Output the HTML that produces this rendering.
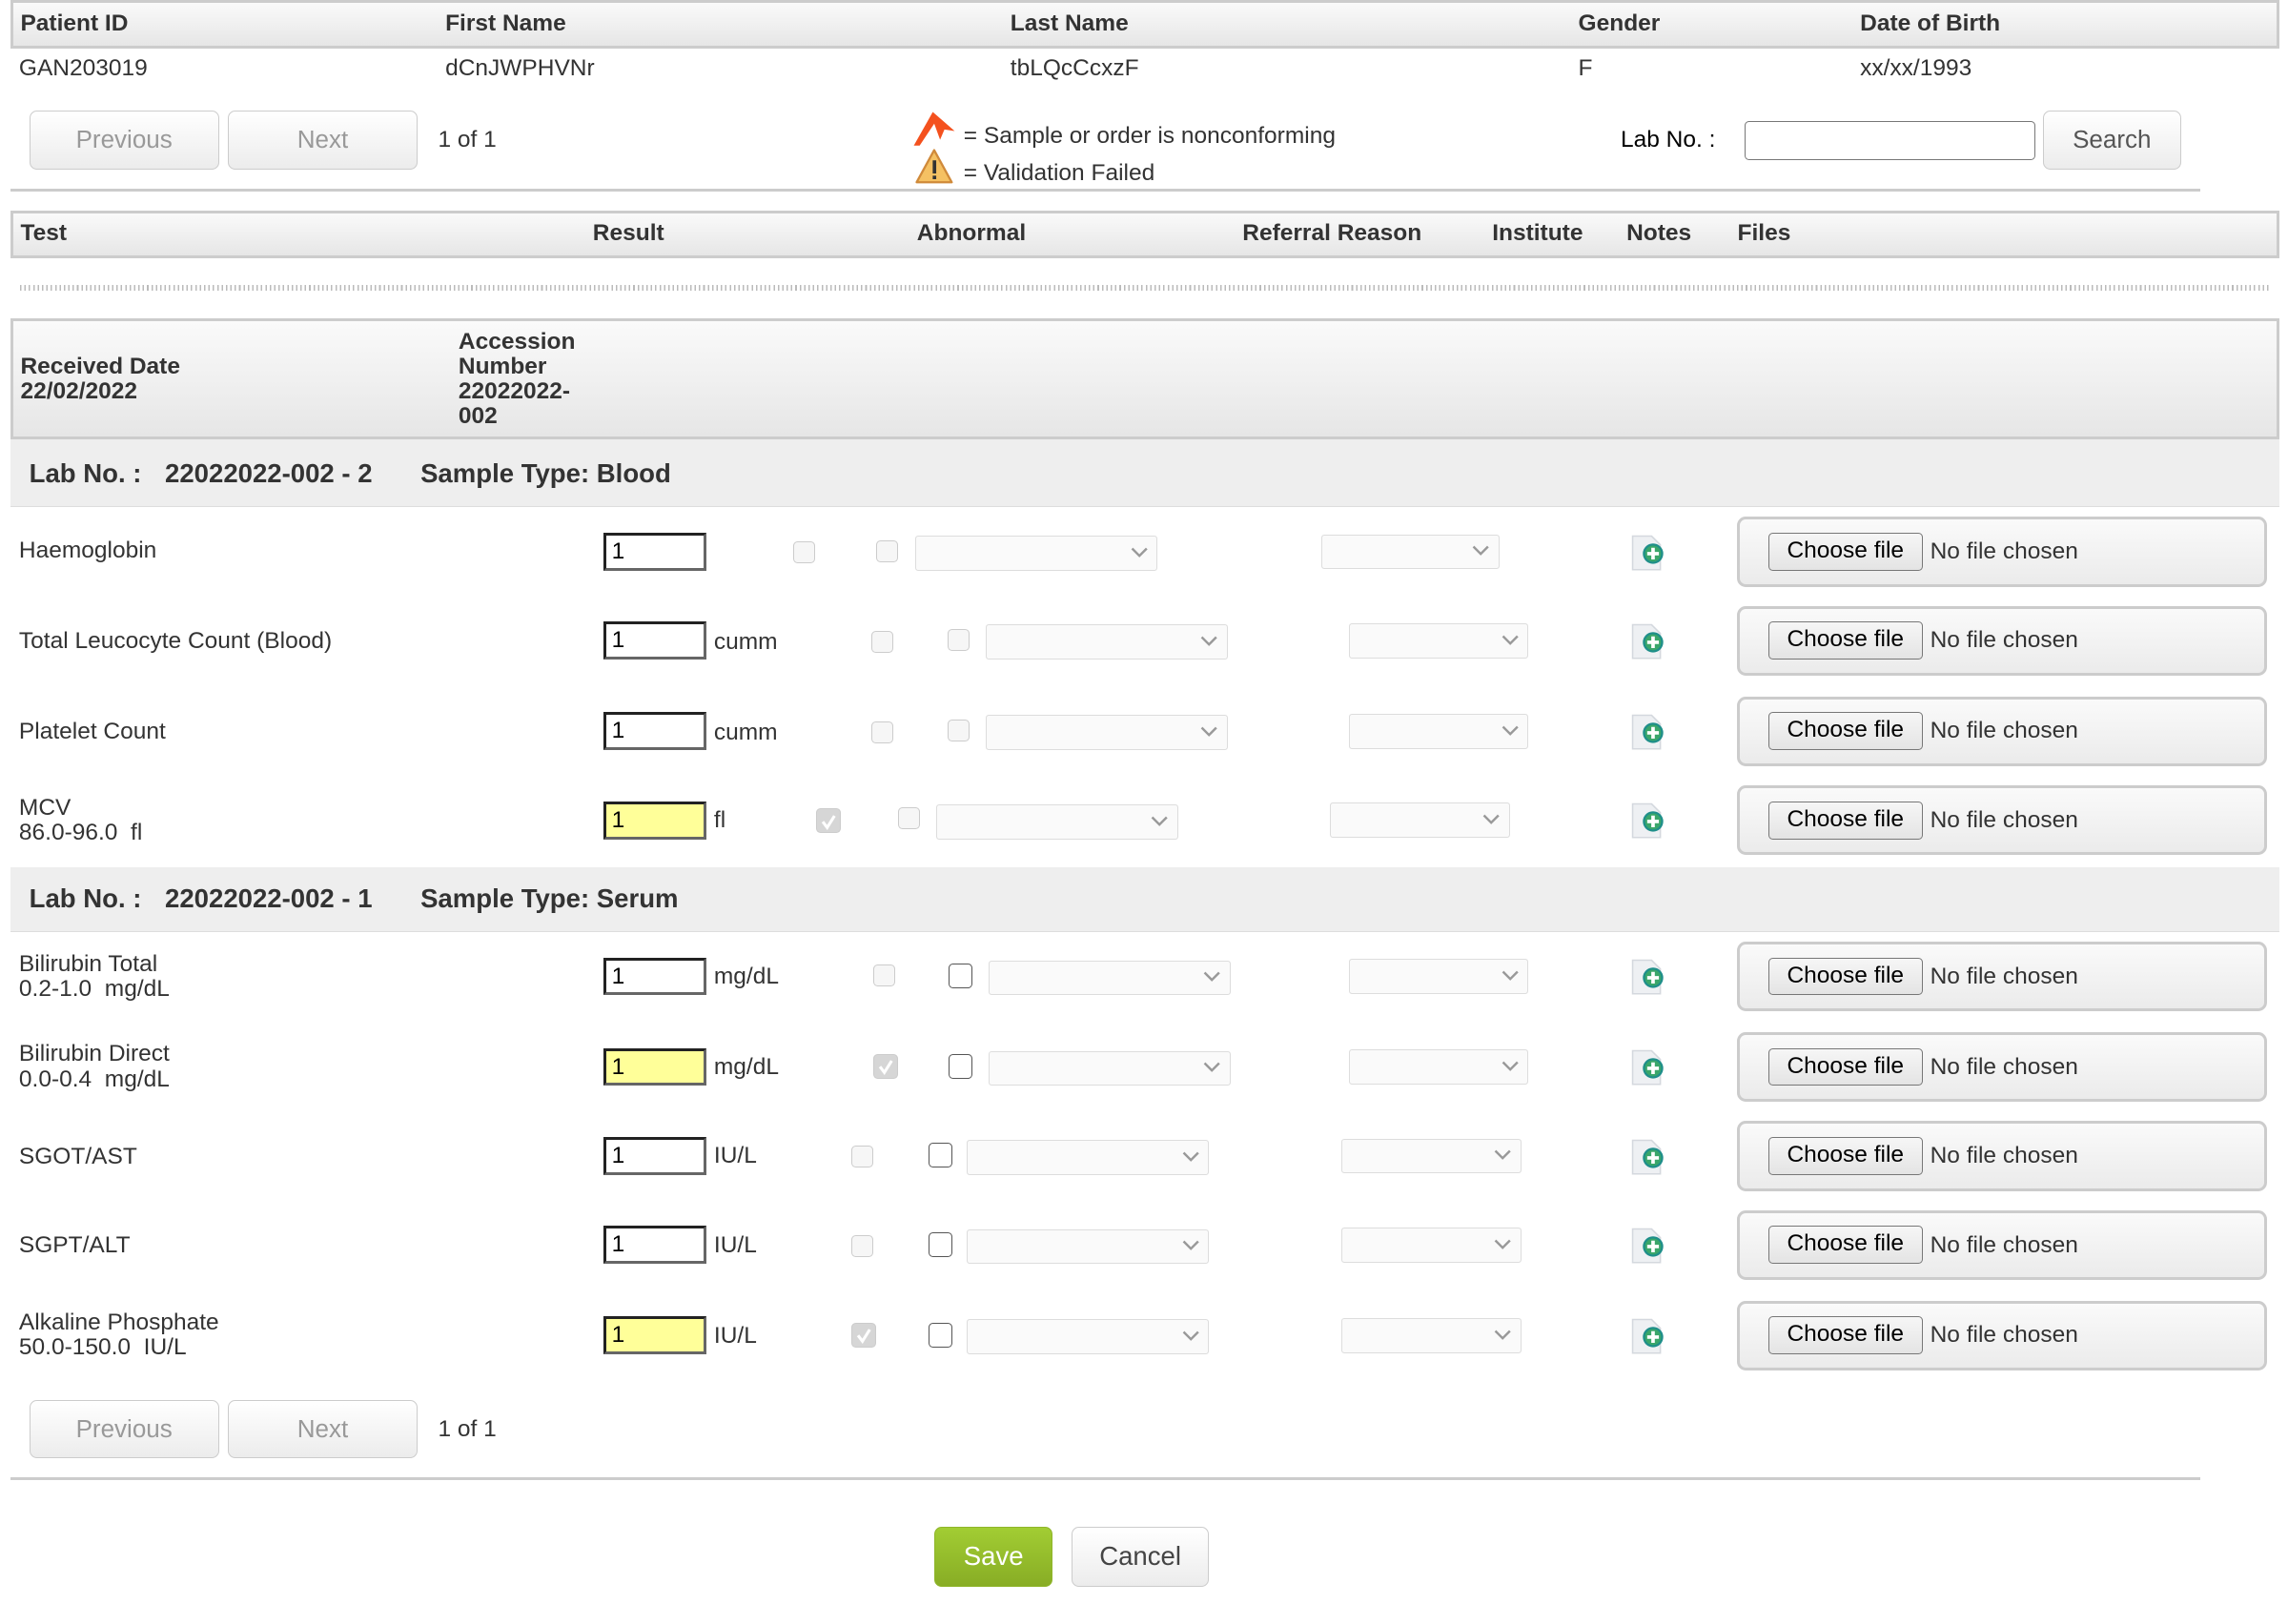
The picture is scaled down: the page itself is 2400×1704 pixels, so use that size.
<!DOCTYPE html>
<html><head><meta charset="utf-8">
<style>
html,body{margin:0;padding:0;background:#fff;}
body{width:2400px;height:1704px;overflow:hidden;}
#w{zoom:1.5315;position:relative;width:1567px;height:1112px;font-family:"Liberation Sans",Arial,sans-serif;font-size:16px;color:#333;}
#w div,#w span{position:absolute;white-space:nowrap;}
.bar{background:linear-gradient(#fafafa,#e6e6e6);border:2px solid #ccc;box-sizing:border-box;}
.b{font-weight:bold;}
.btn{border:1px solid #ccc;border-radius:5px;background:linear-gradient(#fff,#ececec);box-sizing:border-box;text-align:center;color:#999;font-size:17px;}
.inp{width:71px;height:26px;box-sizing:border-box;border:2px solid #666;border-top-color:#222;border-left-color:#222;background:#fff;font-size:16px;color:#000;padding-left:4px;line-height:22px;}
.y{background:#ffff99;}
.cb{width:15px;height:15px;box-sizing:border-box;border:1px solid #ccc;border-radius:3px;background:#f6f6f6;}
.cb.en{border:1px solid #555;background:#fff;}
.cb.ck{background:#d6d6d6;border-color:#ccc;}
.sel{height:24px;box-sizing:border-box;border:1px solid #ddd;border-radius:2px;background:#fafafa;}
.sel svg{position:absolute;right:6px;top:7px;}
.fb{width:363px;height:48px;box-sizing:border-box;border:2px solid #ccc;border-radius:6px;background:linear-gradient(#fafafa,#ebebeb);}
.cf{left:19px;top:9px;width:106px;height:26px;box-sizing:border-box;border:1px solid #777;border-radius:3px;background:linear-gradient(#f6f6f6,#e4e4e4);color:#000;font-size:16px;text-align:center;line-height:24px;}
.nf{left:130px;top:13px;color:#333;font-size:16px;}
.nm{left:13px;font-size:16px;color:#333;line-height:17px;}
</style></head><body><div id="w">

<div class="bar" style="left:7px;top:0;width:1554px;height:33px;"></div>
<div class="b" style="left:14px;top:7px;">Patient ID</div>
<div class="b" style="left:305px;top:7px;">First Name</div>
<div class="b" style="left:692px;top:7px;">Last Name</div>
<div class="b" style="left:1081px;top:7px;">Gender</div>
<div class="b" style="left:1274px;top:7px;">Date of Birth</div>
<div style="left:13px;top:38px;">GAN203019</div>
<div style="left:305px;top:38px;">dCnJWPHVNr</div>
<div style="left:692px;top:38px;">tbLQcCcxzF</div>
<div style="left:1081px;top:38px;">F</div>
<div style="left:1274px;top:38px;">xx/xx/1993</div>

<div class="btn" style="left:20px;top:76px;width:130px;height:40px;line-height:38px;">Previous</div>
<div class="btn" style="left:156px;top:76px;width:130px;height:40px;line-height:38px;">Next</div>
<div style="left:300px;top:87px;">1 of 1</div>

<svg style="position:absolute;left:625px;top:76px" width="30" height="25" viewBox="0 0 30 25"><path d="M1 24 L14 1 L29 14 L22 13 L19 20 L15 9 L5 24 Z" fill="#f4511e"/></svg>
<div style="left:660px;top:84px;">= Sample or order is nonconforming</div>
<svg style="position:absolute;left:627px;top:102px" width="26" height="24" viewBox="0 0 26 24"><path d="M13 1 L25 23 L1 23 Z" fill="#f5c163" stroke="#d08a3a" stroke-width="1.5" stroke-linejoin="round"/><rect x="12" y="8" width="2.4" height="9" fill="#333"/><rect x="12" y="18.5" width="2.4" height="2.4" fill="#333"/></svg>
<div style="left:660px;top:110px;">= Validation Failed</div>

<div style="left:1110px;top:87px;color:#000;">Lab No. :</div>
<div style="left:1195px;top:83px;width:199px;height:27px;box-sizing:border-box;border:1px solid #777;border-radius:3px;background:#fff;"></div>
<div class="btn" style="left:1399px;top:76px;width:95px;height:40px;line-height:38px;color:#555;">Search</div>
<div style="left:7px;top:129px;width:1500px;height:2px;background:#ccc;"></div>

<div class="bar" style="left:7px;top:144px;width:1554px;height:33px;"></div>
<div class="b" style="left:14px;top:151px;">Test</div>
<div class="b" style="left:406px;top:151px;">Result</div>
<div class="b" style="left:628px;top:151px;">Abnormal</div>
<div class="b" style="left:851px;top:151px;">Referral Reason</div>
<div class="b" style="left:1022px;top:151px;">Institute</div>
<div class="b" style="left:1114px;top:151px;">Notes</div>
<div class="b" style="left:1190px;top:151px;">Files</div>

<div style="left:14px;top:195px;width:1541px;height:4px;background:repeating-linear-gradient(90deg,#bbb 0 1px,#fff 1px 3px);"></div>

<div class="bar" style="left:7px;top:218px;width:1554px;height:83px;"></div>
<div class="b" style="left:14px;top:243px;line-height:17px;">Received Date<br>22/02/2022</div>
<div class="b" style="left:314px;top:226px;line-height:17px;">Accession<br>Number<br>22022022-<br>002</div>

<div style="left:7px;top:301px;width:1554px;height:46px;background:#eee;border-bottom:1px solid #ddd;"></div>
<div class="b" style="left:20px;top:314px;font-size:18px;">Lab No. :</div>
<div class="b" style="left:113px;top:314px;font-size:18px;">22022022-002 - 2</div>
<div class="b" style="left:288px;top:314px;font-size:18px;">Sample Type: Blood</div>

<div style="left:7px;top:594px;width:1554px;height:44px;background:#eee;border-bottom:1px solid #ddd;"></div>
<div class="b" style="left:20px;top:605px;font-size:18px;">Lab No. :</div>
<div class="b" style="left:113px;top:605px;font-size:18px;">22022022-002 - 1</div>
<div class="b" style="left:288px;top:605px;font-size:18px;">Sample Type: Serum</div>

<div class="nm" style="top:369px;">Haemoglobin</div>
<div class="inp" style="left:413px;top:365px;">1</div>
<div class="cb" style="left:543px;top:371px;"></div>
<div class="cb" style="left:600px;top:370px;"></div>
<div class="sel" style="left:627px;top:367px;width:166px;"><svg width="12" height="8"><path d="M1 1 L6 6 L11 1" fill="none" stroke="#999" stroke-width="1.6"/></svg></div>
<div class="sel" style="left:905px;top:366px;width:122px;"><svg width="12" height="8"><path d="M1 1 L6 6 L11 1" fill="none" stroke="#999" stroke-width="1.6"/></svg></div>

<div class="nm" style="top:431px;">Total Leucocyte Count (Blood)</div>
<div class="inp" style="left:413px;top:426px;">1</div>
<div style="left:489px;top:431px;">cumm</div>
<div class="cb" style="left:597px;top:432px;"></div>
<div class="cb" style="left:649px;top:431px;"></div>
<div class="sel" style="left:675px;top:428px;width:166px;"><svg width="12" height="8"><path d="M1 1 L6 6 L11 1" fill="none" stroke="#999" stroke-width="1.6"/></svg></div>
<div class="sel" style="left:924px;top:427px;width:123px;"><svg width="12" height="8"><path d="M1 1 L6 6 L11 1" fill="none" stroke="#999" stroke-width="1.6"/></svg></div>

<div class="nm" style="top:493px;">Platelet Count</div>
<div class="inp" style="left:413px;top:488px;">1</div>
<div style="left:489px;top:493px;">cumm</div>
<div class="cb" style="left:597px;top:494px;"></div>
<div class="cb" style="left:649px;top:493px;"></div>
<div class="sel" style="left:675px;top:490px;width:166px;"><svg width="12" height="8"><path d="M1 1 L6 6 L11 1" fill="none" stroke="#999" stroke-width="1.6"/></svg></div>
<div class="sel" style="left:924px;top:489px;width:123px;"><svg width="12" height="8"><path d="M1 1 L6 6 L11 1" fill="none" stroke="#999" stroke-width="1.6"/></svg></div>

<div class="nm" style="top:545px;">MCV<br>86.0-96.0&nbsp; fl</div>
<div class="inp y" style="left:413px;top:549px;">1</div>
<div style="left:489px;top:553px;">fl</div>
<div class="cb ck" style="left:559px;top:554px;width:17px;height:17px;"><svg style="position:absolute;left:2px;top:2px" width="12" height="12"><path d="M2 6 L5 10 L10 2" fill="none" stroke="#fff" stroke-width="2"/></svg></div>
<div class="cb" style="left:615px;top:553px;"></div>
<div class="sel" style="left:641px;top:551px;width:166px;"><svg width="12" height="8"><path d="M1 1 L6 6 L11 1" fill="none" stroke="#999" stroke-width="1.6"/></svg></div>
<div class="sel" style="left:911px;top:550px;width:123px;"><svg width="12" height="8"><path d="M1 1 L6 6 L11 1" fill="none" stroke="#999" stroke-width="1.6"/></svg></div>

<div class="nm" style="top:652px;">Bilirubin Total<br>0.2-1.0&nbsp; mg/dL</div>
<div class="inp" style="left:413px;top:656px;">1</div>
<div style="left:489px;top:660px;">mg/dL</div>
<div class="cb" style="left:598px;top:661px;"></div>
<div class="cb en" style="left:650px;top:660px;width:16px;height:17px;"></div>
<div class="sel" style="left:677px;top:658px;width:166px;"><svg width="12" height="8"><path d="M1 1 L6 6 L11 1" fill="none" stroke="#999" stroke-width="1.6"/></svg></div>
<div class="sel" style="left:924px;top:657px;width:123px;"><svg width="12" height="8"><path d="M1 1 L6 6 L11 1" fill="none" stroke="#999" stroke-width="1.6"/></svg></div>

<div class="nm" style="top:714px;">Bilirubin Direct<br>0.0-0.4&nbsp; mg/dL</div>
<div class="inp y" style="left:413px;top:718px;">1</div>
<div style="left:489px;top:722px;">mg/dL</div>
<div class="cb ck" style="left:598px;top:722px;width:17px;height:17px;"><svg style="position:absolute;left:2px;top:2px" width="12" height="12"><path d="M2 6 L5 10 L10 2" fill="none" stroke="#fff" stroke-width="2"/></svg></div>
<div class="cb en" style="left:650px;top:722px;width:16px;height:17px;"></div>
<div class="sel" style="left:677px;top:720px;width:166px;"><svg width="12" height="8"><path d="M1 1 L6 6 L11 1" fill="none" stroke="#999" stroke-width="1.6"/></svg></div>
<div class="sel" style="left:924px;top:719px;width:123px;"><svg width="12" height="8"><path d="M1 1 L6 6 L11 1" fill="none" stroke="#999" stroke-width="1.6"/></svg></div>

<div class="nm" style="top:784px;">SGOT/AST</div>
<div class="inp" style="left:413px;top:779px;">1</div>
<div style="left:489px;top:783px;">IU/L</div>
<div class="cb" style="left:583px;top:785px;"></div>
<div class="cb en" style="left:636px;top:783px;width:16px;height:17px;"></div>
<div class="sel" style="left:662px;top:781px;width:166px;"><svg width="12" height="8"><path d="M1 1 L6 6 L11 1" fill="none" stroke="#999" stroke-width="1.6"/></svg></div>
<div class="sel" style="left:919px;top:780px;width:123px;"><svg width="12" height="8"><path d="M1 1 L6 6 L11 1" fill="none" stroke="#999" stroke-width="1.6"/></svg></div>

<div class="nm" style="top:845px;">SGPT/ALT</div>
<div class="inp" style="left:413px;top:840px;">1</div>
<div style="left:489px;top:844px;">IU/L</div>
<div class="cb" style="left:583px;top:846px;"></div>
<div class="cb en" style="left:636px;top:844px;width:16px;height:17px;"></div>
<div class="sel" style="left:662px;top:842px;width:166px;"><svg width="12" height="8"><path d="M1 1 L6 6 L11 1" fill="none" stroke="#999" stroke-width="1.6"/></svg></div>
<div class="sel" style="left:919px;top:841px;width:123px;"><svg width="12" height="8"><path d="M1 1 L6 6 L11 1" fill="none" stroke="#999" stroke-width="1.6"/></svg></div>

<div class="nm" style="top:898px;">Alkaline Phosphate<br>50.0-150.0&nbsp; IU/L</div>
<div class="inp y" style="left:413px;top:902px;">1</div>
<div style="left:489px;top:906px;">IU/L</div>
<div class="cb ck" style="left:583px;top:906px;width:17px;height:17px;"><svg style="position:absolute;left:2px;top:2px" width="12" height="12"><path d="M2 6 L5 10 L10 2" fill="none" stroke="#fff" stroke-width="2"/></svg></div>
<div class="cb en" style="left:636px;top:906px;width:16px;height:17px;"></div>
<div class="sel" style="left:662px;top:904px;width:166px;"><svg width="12" height="8"><path d="M1 1 L6 6 L11 1" fill="none" stroke="#999" stroke-width="1.6"/></svg></div>
<div class="sel" style="left:919px;top:903px;width:123px;"><svg width="12" height="8"><path d="M1 1 L6 6 L11 1" fill="none" stroke="#999" stroke-width="1.6"/></svg></div>

<svg style="position:absolute;left:1117px;top:366px" width="24" height="25" viewBox="0 0 24 25"><path d="M1 1 H14 L20 7 V24 H1 Z" fill="#eef0f3" stroke="#d4d8de" stroke-width="1"/><circle cx="15" cy="13" r="7" fill="#1f8f8a"/><circle cx="15" cy="13" r="5.5" fill="#3aa66a"/><path d="M15 9 V17 M11 13 H19" stroke="#fff" stroke-width="2.4"/></svg>
<svg style="position:absolute;left:1117px;top:427px" width="24" height="25" viewBox="0 0 24 25"><path d="M1 1 H14 L20 7 V24 H1 Z" fill="#eef0f3" stroke="#d4d8de" stroke-width="1"/><circle cx="15" cy="13" r="7" fill="#1f8f8a"/><circle cx="15" cy="13" r="5.5" fill="#3aa66a"/><path d="M15 9 V17 M11 13 H19" stroke="#fff" stroke-width="2.4"/></svg>
<svg style="position:absolute;left:1117px;top:489px" width="24" height="25" viewBox="0 0 24 25"><path d="M1 1 H14 L20 7 V24 H1 Z" fill="#eef0f3" stroke="#d4d8de" stroke-width="1"/><circle cx="15" cy="13" r="7" fill="#1f8f8a"/><circle cx="15" cy="13" r="5.5" fill="#3aa66a"/><path d="M15 9 V17 M11 13 H19" stroke="#fff" stroke-width="2.4"/></svg>
<svg style="position:absolute;left:1117px;top:550px" width="24" height="25" viewBox="0 0 24 25"><path d="M1 1 H14 L20 7 V24 H1 Z" fill="#eef0f3" stroke="#d4d8de" stroke-width="1"/><circle cx="15" cy="13" r="7" fill="#1f8f8a"/><circle cx="15" cy="13" r="5.5" fill="#3aa66a"/><path d="M15 9 V17 M11 13 H19" stroke="#fff" stroke-width="2.4"/></svg>
<svg style="position:absolute;left:1117px;top:657px" width="24" height="25" viewBox="0 0 24 25"><path d="M1 1 H14 L20 7 V24 H1 Z" fill="#eef0f3" stroke="#d4d8de" stroke-width="1"/><circle cx="15" cy="13" r="7" fill="#1f8f8a"/><circle cx="15" cy="13" r="5.5" fill="#3aa66a"/><path d="M15 9 V17 M11 13 H19" stroke="#fff" stroke-width="2.4"/></svg>
<svg style="position:absolute;left:1117px;top:719px" width="24" height="25" viewBox="0 0 24 25"><path d="M1 1 H14 L20 7 V24 H1 Z" fill="#eef0f3" stroke="#d4d8de" stroke-width="1"/><circle cx="15" cy="13" r="7" fill="#1f8f8a"/><circle cx="15" cy="13" r="5.5" fill="#3aa66a"/><path d="M15 9 V17 M11 13 H19" stroke="#fff" stroke-width="2.4"/></svg>
<svg style="position:absolute;left:1117px;top:780px" width="24" height="25" viewBox="0 0 24 25"><path d="M1 1 H14 L20 7 V24 H1 Z" fill="#eef0f3" stroke="#d4d8de" stroke-width="1"/><circle cx="15" cy="13" r="7" fill="#1f8f8a"/><circle cx="15" cy="13" r="5.5" fill="#3aa66a"/><path d="M15 9 V17 M11 13 H19" stroke="#fff" stroke-width="2.4"/></svg>
<svg style="position:absolute;left:1117px;top:841px" width="24" height="25" viewBox="0 0 24 25"><path d="M1 1 H14 L20 7 V24 H1 Z" fill="#eef0f3" stroke="#d4d8de" stroke-width="1"/><circle cx="15" cy="13" r="7" fill="#1f8f8a"/><circle cx="15" cy="13" r="5.5" fill="#3aa66a"/><path d="M15 9 V17 M11 13 H19" stroke="#fff" stroke-width="2.4"/></svg>
<svg style="position:absolute;left:1117px;top:903px" width="24" height="25" viewBox="0 0 24 25"><path d="M1 1 H14 L20 7 V24 H1 Z" fill="#eef0f3" stroke="#d4d8de" stroke-width="1"/><circle cx="15" cy="13" r="7" fill="#1f8f8a"/><circle cx="15" cy="13" r="5.5" fill="#3aa66a"/><path d="M15 9 V17 M11 13 H19" stroke="#fff" stroke-width="2.4"/></svg>

<div class="fb" style="left:1190px;top:354px;"><div class="cf">Choose file</div><div class="nf">No file chosen</div></div>
<div class="fb" style="left:1190px;top:415px;"><div class="cf">Choose file</div><div class="nf">No file chosen</div></div>
<div class="fb" style="left:1190px;top:477px;"><div class="cf">Choose file</div><div class="nf">No file chosen</div></div>
<div class="fb" style="left:1190px;top:538px;"><div class="cf">Choose file</div><div class="nf">No file chosen</div></div>
<div class="fb" style="left:1190px;top:645px;"><div class="cf">Choose file</div><div class="nf">No file chosen</div></div>
<div class="fb" style="left:1190px;top:707px;"><div class="cf">Choose file</div><div class="nf">No file chosen</div></div>
<div class="fb" style="left:1190px;top:768px;"><div class="cf">Choose file</div><div class="nf">No file chosen</div></div>
<div class="fb" style="left:1190px;top:829px;"><div class="cf">Choose file</div><div class="nf">No file chosen</div></div>
<div class="fb" style="left:1190px;top:891px;"><div class="cf">Choose file</div><div class="nf">No file chosen</div></div>

<div class="btn" style="left:20px;top:959px;width:130px;height:40px;line-height:38px;">Previous</div>
<div class="btn" style="left:156px;top:959px;width:130px;height:40px;line-height:38px;">Next</div>
<div style="left:300px;top:970px;">1 of 1</div>
<div style="left:7px;top:1012px;width:1500px;height:2px;background:#ccc;"></div>

<div style="left:640px;top:1046px;width:81px;height:41px;box-sizing:border-box;border:1px solid #8fb52a;border-radius:5px;background:linear-gradient(#a2cd33,#88ad25);color:#fff;font-size:18px;text-align:center;line-height:39px;">Save</div>
<div style="left:734px;top:1046px;width:94px;height:41px;box-sizing:border-box;border:1px solid #ccc;border-radius:5px;background:linear-gradient(#fff,#ececec);color:#444;font-size:18px;text-align:center;line-height:39px;">Cancel</div>

</div></body></html>
